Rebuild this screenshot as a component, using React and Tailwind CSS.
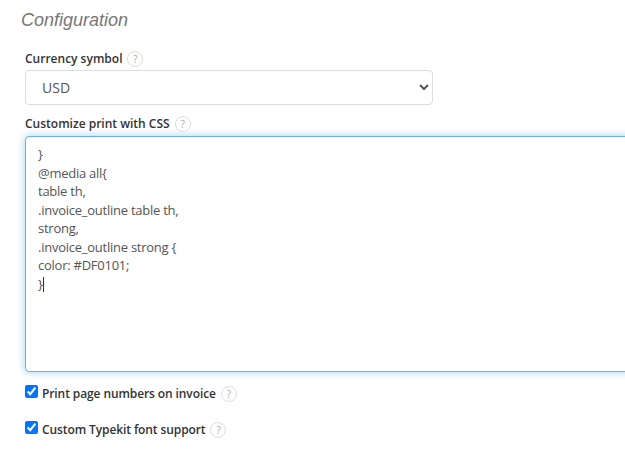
const cssLines = [
  "}",
  "@media all{",
  "table th,",
  ".invoice_outline table th,",
  "strong,",
  ".invoice_outline strong {",
  "color: #DF0101;",
];

function HelpBadge() {
  return (
    <span className="ml-[5px] inline-flex h-4 w-4 shrink-0 items-center justify-center rounded-full border border-[#dddddd] bg-white text-[10px] font-normal leading-none text-[#aaaaaa]">
      ?
    </span>
  );
}

function FieldLabel({ children }) {
  return (
    <label className="flex h-[17px] items-center text-[12px] font-semibold text-[#333333]">
      {children}
      <HelpBadge />
    </label>
  );
}

function CheckRow({ children }) {
  return (
    <label className="flex items-start text-[12px] font-semibold tracking-[-0.1px] text-[#333333]">
      <input
        type="checkbox"
        defaultChecked
        className="m-0 mr-1 h-[13px] w-[13px] accent-[#0075ff]"
      />
      <span className="flex h-[17px] items-center">
        {children}
        <HelpBadge />
      </span>
    </label>
  );
}

export default function App() {
  return (
    <div className="h-[463px] w-[625px] overflow-hidden bg-white pl-[25px] pt-[8px] font-['Open_Sans',sans-serif]">
      <h2 className="-ml-1 font-['Liberation_Sans',sans-serif] text-[18px] italic leading-[24px] text-[#777777]">
        Configuration
      </h2>

      <div className="mt-[18px]">
        <FieldLabel>Currency symbol</FieldLabel>
        <select className="mt-[3px] block h-[35px] w-[408px] rounded border border-[#dddddd] bg-white px-[12px] text-[14px] text-[#555555] outline-none">
          <option>USD</option>
        </select>
      </div>

      <div className="mt-[10px]">
        <FieldLabel>Customize print with CSS</FieldLabel>
        <div
          role="textbox"
          className="mt-[4px] h-[236px] w-[640px] rounded border border-[#66afe9] bg-white px-3 py-2 text-[13px] leading-[18.57px] tracking-[-0.25px] text-[#555555] shadow-[0_0_8px_rgba(102,175,233,0.6)]"
        >
          {cssLines.map((line) => (
            <div key={line}>{line}</div>
          ))}
          <div className="flex items-center">
            {"}"}
            <span className="h-[15px] w-px bg-[#333333]" />
          </div>
        </div>
      </div>

      <div className="mt-[13px] flex flex-col gap-[19px]">
        <CheckRow>Print page numbers on invoice</CheckRow>
        <CheckRow>Custom Typekit font support</CheckRow>
      </div>
    </div>
  );
}
